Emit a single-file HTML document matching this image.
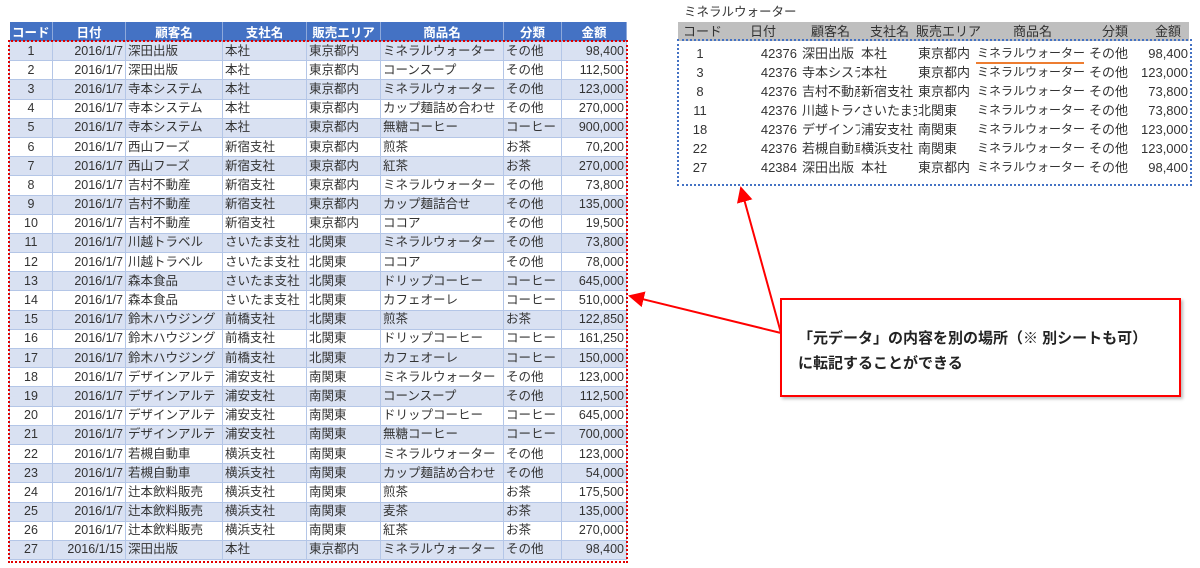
<!DOCTYPE html>
<html><head><meta charset="utf-8"><style>
*{margin:0;padding:0;box-sizing:border-box}
body{width:1200px;height:568px;background:#fff;position:relative;overflow:hidden;font-family:"Liberation Sans","Noto Sans CJK JP",sans-serif;color:#333;font-size:12.5px}
table{border-collapse:collapse;table-layout:fixed;position:absolute}
#t1{left:9px;top:22px;width:617px}
#t1 th{background:#4472c4;color:#fff;font-weight:bold;height:19px;border-right:1px solid #8ea9db;font-size:12.5px}
#t1 td{height:19.2px;border:1px solid #b4c6e7;padding:0 2px;white-space:nowrap;overflow:hidden;line-height:17px}
#t1 tbody tr:nth-child(odd) td{background:#d9e1f2}
.c{text-align:center}.r{text-align:right}
.dot1{position:absolute;left:8px;top:40px;width:620px;height:523px;border:2px dotted #e00000}
.dot2{position:absolute;left:677px;top:39px;width:515px;height:147px;border:2px dotted #4472c4}
.hb{position:absolute;left:678px;top:22px;width:511px;height:19px;background:#bfbfbf}
.s{position:absolute;white-space:nowrap;overflow:hidden;font-size:13px;line-height:19px;height:19px}
.p{font-size:12px;width:108px}
.call{position:absolute;left:780px;top:298px;width:401px;height:99px;border:2px solid #f00;background:#fff;font-weight:bold;font-size:15px;color:#222;padding:26px 0 0 16px;line-height:25px;box-shadow:2px 2px 3px #bbb}
</style></head><body>
<table id="t1"><colgroup><col style="width:43px"><col style="width:73px"><col style="width:97px"><col style="width:84px"><col style="width:74px"><col style="width:123px"><col style="width:58px"><col style="width:65px"></colgroup>
<thead><tr><th>コード</th><th>日付</th><th>顧客名</th><th>支社名</th><th>販売エリア</th><th>商品名</th><th>分類</th><th>金額</th></tr></thead>
<tbody>
<tr><td class="c">1</td><td class="r">2016/1/7</td><td>深田出版</td><td>本社</td><td>東京都内</td><td>ミネラルウォーター</td><td>その他</td><td class="r">98,400</td></tr>
<tr><td class="c">2</td><td class="r">2016/1/7</td><td>深田出版</td><td>本社</td><td>東京都内</td><td>コーンスープ</td><td>その他</td><td class="r">112,500</td></tr>
<tr><td class="c">3</td><td class="r">2016/1/7</td><td>寺本システム</td><td>本社</td><td>東京都内</td><td>ミネラルウォーター</td><td>その他</td><td class="r">123,000</td></tr>
<tr><td class="c">4</td><td class="r">2016/1/7</td><td>寺本システム</td><td>本社</td><td>東京都内</td><td>カップ麺詰め合わせ</td><td>その他</td><td class="r">270,000</td></tr>
<tr><td class="c">5</td><td class="r">2016/1/7</td><td>寺本システム</td><td>本社</td><td>東京都内</td><td>無糖コーヒー</td><td>コーヒー</td><td class="r">900,000</td></tr>
<tr><td class="c">6</td><td class="r">2016/1/7</td><td>西山フーズ</td><td>新宿支社</td><td>東京都内</td><td>煎茶</td><td>お茶</td><td class="r">70,200</td></tr>
<tr><td class="c">7</td><td class="r">2016/1/7</td><td>西山フーズ</td><td>新宿支社</td><td>東京都内</td><td>紅茶</td><td>お茶</td><td class="r">270,000</td></tr>
<tr><td class="c">8</td><td class="r">2016/1/7</td><td>吉村不動産</td><td>新宿支社</td><td>東京都内</td><td>ミネラルウォーター</td><td>その他</td><td class="r">73,800</td></tr>
<tr><td class="c">9</td><td class="r">2016/1/7</td><td>吉村不動産</td><td>新宿支社</td><td>東京都内</td><td>カップ麺詰合せ</td><td>その他</td><td class="r">135,000</td></tr>
<tr><td class="c">10</td><td class="r">2016/1/7</td><td>吉村不動産</td><td>新宿支社</td><td>東京都内</td><td>ココア</td><td>その他</td><td class="r">19,500</td></tr>
<tr><td class="c">11</td><td class="r">2016/1/7</td><td>川越トラベル</td><td>さいたま支社</td><td>北関東</td><td>ミネラルウォーター</td><td>その他</td><td class="r">73,800</td></tr>
<tr><td class="c">12</td><td class="r">2016/1/7</td><td>川越トラベル</td><td>さいたま支社</td><td>北関東</td><td>ココア</td><td>その他</td><td class="r">78,000</td></tr>
<tr><td class="c">13</td><td class="r">2016/1/7</td><td>森本食品</td><td>さいたま支社</td><td>北関東</td><td>ドリップコーヒー</td><td>コーヒー</td><td class="r">645,000</td></tr>
<tr><td class="c">14</td><td class="r">2016/1/7</td><td>森本食品</td><td>さいたま支社</td><td>北関東</td><td>カフェオーレ</td><td>コーヒー</td><td class="r">510,000</td></tr>
<tr><td class="c">15</td><td class="r">2016/1/7</td><td>鈴木ハウジング</td><td>前橋支社</td><td>北関東</td><td>煎茶</td><td>お茶</td><td class="r">122,850</td></tr>
<tr><td class="c">16</td><td class="r">2016/1/7</td><td>鈴木ハウジング</td><td>前橋支社</td><td>北関東</td><td>ドリップコーヒー</td><td>コーヒー</td><td class="r">161,250</td></tr>
<tr><td class="c">17</td><td class="r">2016/1/7</td><td>鈴木ハウジング</td><td>前橋支社</td><td>北関東</td><td>カフェオーレ</td><td>コーヒー</td><td class="r">150,000</td></tr>
<tr><td class="c">18</td><td class="r">2016/1/7</td><td>デザインアルテ</td><td>浦安支社</td><td>南関東</td><td>ミネラルウォーター</td><td>その他</td><td class="r">123,000</td></tr>
<tr><td class="c">19</td><td class="r">2016/1/7</td><td>デザインアルテ</td><td>浦安支社</td><td>南関東</td><td>コーンスープ</td><td>その他</td><td class="r">112,500</td></tr>
<tr><td class="c">20</td><td class="r">2016/1/7</td><td>デザインアルテ</td><td>浦安支社</td><td>南関東</td><td>ドリップコーヒー</td><td>コーヒー</td><td class="r">645,000</td></tr>
<tr><td class="c">21</td><td class="r">2016/1/7</td><td>デザインアルテ</td><td>浦安支社</td><td>南関東</td><td>無糖コーヒー</td><td>コーヒー</td><td class="r">700,000</td></tr>
<tr><td class="c">22</td><td class="r">2016/1/7</td><td>若槻自動車</td><td>横浜支社</td><td>南関東</td><td>ミネラルウォーター</td><td>その他</td><td class="r">123,000</td></tr>
<tr><td class="c">23</td><td class="r">2016/1/7</td><td>若槻自動車</td><td>横浜支社</td><td>南関東</td><td>カップ麺詰め合わせ</td><td>その他</td><td class="r">54,000</td></tr>
<tr><td class="c">24</td><td class="r">2016/1/7</td><td>辻本飲料販売</td><td>横浜支社</td><td>南関東</td><td>煎茶</td><td>お茶</td><td class="r">175,500</td></tr>
<tr><td class="c">25</td><td class="r">2016/1/7</td><td>辻本飲料販売</td><td>横浜支社</td><td>南関東</td><td>麦茶</td><td>お茶</td><td class="r">135,000</td></tr>
<tr><td class="c">26</td><td class="r">2016/1/7</td><td>辻本飲料販売</td><td>横浜支社</td><td>南関東</td><td>紅茶</td><td>お茶</td><td class="r">270,000</td></tr>
<tr><td class="c">27</td><td class="r">2016/1/15</td><td>深田出版</td><td>本社</td><td>東京都内</td><td>ミネラルウォーター</td><td>その他</td><td class="r">98,400</td></tr>
</tbody></table>
<div class="dot1"></div>

<div class="s" style="left:684px;top:3px;font-size:12.5px">ミネラルウォーター</div>
<div class="hb"></div>
<div class="s" style="left:683px;top:22px">コード</div>
<div class="s" style="left:750px;top:22px">日付</div>
<div class="s" style="left:811px;top:22px">顧客名</div>
<div class="s" style="left:870px;top:22px">支社名</div>
<div class="s" style="left:916px;top:22px">販売エリア</div>
<div class="s" style="left:1013px;top:22px">商品名</div>
<div class="s" style="left:1102px;top:22px">分類</div>
<div class="s" style="left:1155px;top:22px">金額</div>

<div class="s" style="left:690px;top:44px;width:20px;text-align:center">1</div><div class="s" style="left:740px;top:44px;width:57px;text-align:right">42376</div><div class="s" style="left:802px;top:44px;width:58px">深田出版</div><div class="s" style="left:861px;top:44px">本社</div><div class="s" style="left:918px;top:44px">東京都内</div><div class="s p" style="left:977px;top:44px">ミネラルウォーター</div><div class="s" style="left:1089px;top:44px">その他</div><div class="s" style="left:1120px;top:44px;width:68px;text-align:right">98,400</div>
<div class="s" style="left:690px;top:63px;width:20px;text-align:center">3</div><div class="s" style="left:740px;top:63px;width:57px;text-align:right">42376</div><div class="s" style="left:802px;top:63px;width:58px">寺本システム</div><div class="s" style="left:861px;top:63px">本社</div><div class="s" style="left:918px;top:63px">東京都内</div><div class="s p" style="left:977px;top:63px">ミネラルウォーター</div><div class="s" style="left:1089px;top:63px">その他</div><div class="s" style="left:1120px;top:63px;width:68px;text-align:right">123,000</div>
<div class="s" style="left:690px;top:82px;width:20px;text-align:center">8</div><div class="s" style="left:740px;top:82px;width:57px;text-align:right">42376</div><div class="s" style="left:802px;top:82px;width:58px">吉村不動産</div><div class="s" style="left:861px;top:82px;width:56px">新宿支社</div><div class="s" style="left:918px;top:82px">東京都内</div><div class="s p" style="left:977px;top:82px">ミネラルウォーター</div><div class="s" style="left:1089px;top:82px">その他</div><div class="s" style="left:1120px;top:82px;width:68px;text-align:right">73,800</div>
<div class="s" style="left:690px;top:101px;width:20px;text-align:center">11</div><div class="s" style="left:740px;top:101px;width:57px;text-align:right">42376</div><div class="s" style="left:802px;top:101px;width:58px">川越トラベル</div><div class="s" style="left:861px;top:101px;width:56px">さいたま支社</div><div class="s" style="left:918px;top:101px">北関東</div><div class="s p" style="left:977px;top:101px">ミネラルウォーター</div><div class="s" style="left:1089px;top:101px">その他</div><div class="s" style="left:1120px;top:101px;width:68px;text-align:right">73,800</div>
<div class="s" style="left:690px;top:120px;width:20px;text-align:center">18</div><div class="s" style="left:740px;top:120px;width:57px;text-align:right">42376</div><div class="s" style="left:802px;top:120px;width:58px">デザインアルテ</div><div class="s" style="left:861px;top:120px;width:56px">浦安支社</div><div class="s" style="left:918px;top:120px">南関東</div><div class="s p" style="left:977px;top:120px">ミネラルウォーター</div><div class="s" style="left:1089px;top:120px">その他</div><div class="s" style="left:1120px;top:120px;width:68px;text-align:right">123,000</div>
<div class="s" style="left:690px;top:139px;width:20px;text-align:center">22</div><div class="s" style="left:740px;top:139px;width:57px;text-align:right">42376</div><div class="s" style="left:802px;top:139px;width:58px">若槻自動車</div><div class="s" style="left:861px;top:139px;width:56px">横浜支社</div><div class="s" style="left:918px;top:139px">南関東</div><div class="s p" style="left:977px;top:139px">ミネラルウォーター</div><div class="s" style="left:1089px;top:139px">その他</div><div class="s" style="left:1120px;top:139px;width:68px;text-align:right">123,000</div>
<div class="s" style="left:690px;top:158px;width:20px;text-align:center">27</div><div class="s" style="left:740px;top:158px;width:57px;text-align:right">42384</div><div class="s" style="left:802px;top:158px;width:58px">深田出版</div><div class="s" style="left:861px;top:158px">本社</div><div class="s" style="left:918px;top:158px">東京都内</div><div class="s p" style="left:977px;top:158px">ミネラルウォーター</div><div class="s" style="left:1089px;top:158px">その他</div><div class="s" style="left:1120px;top:158px;width:68px;text-align:right">98,400</div>
<div class="dot2"></div>
<div style="position:absolute;left:976px;top:62px;width:108px;height:2px;background:#ed7d31"></div>

<svg style="position:absolute;left:0;top:0" width="1200" height="568">
<defs><marker id="a" markerWidth="8" markerHeight="8" refX="7" refY="4" orient="auto"><path d="M0,0 L8,4 L0,8 z" fill="#f00"/></marker></defs>
<line x1="781" y1="333" x2="630" y2="296" stroke="#f00" stroke-width="2" marker-end="url(#a)"/>
<line x1="781" y1="333" x2="741" y2="188" stroke="#f00" stroke-width="2" marker-end="url(#a)"/>
</svg>
<div class="call">「元データ」の内容を別の場所（※ 別シートも可）<br>に転記することができる</div>
</body></html>
